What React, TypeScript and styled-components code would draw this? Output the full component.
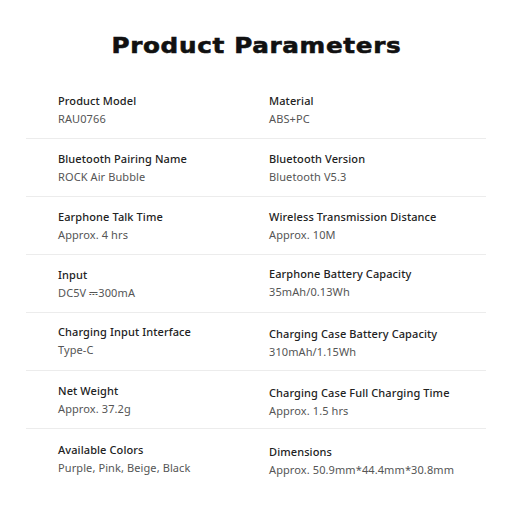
import React from "react";
import styled, { createGlobalStyle } from "styled-components";

const Global = createGlobalStyle`
  html, body { margin: 0; padding: 0; background: #fff; }
  body { font-family: "Noto Sans", "DejaVu Sans", sans-serif; }
`;

const Page = styled.div`
  width: 512px;
  height: 512px;
  display: flex;
  flex-direction: column;
  align-items: center;
  background: #fff;
`;

const Title = styled.h1`
  margin: 0;
  padding-top: 32px;
  height: 81px;
  box-sizing: border-box;
  font-family: "DejaVu Sans", sans-serif;
  font-weight: 700;
  font-size: 22px;
  line-height: 28px;
  letter-spacing: 0.6px;
  color: #111;
  -webkit-text-stroke: 0.6px #111;
  transform: scaleX(1.12);
`;

const Table = styled.div`
  width: 460px;
  display: flex;
  flex-direction: column;
`;

const Row = styled.div<{ $last?: boolean }>`
  display: grid;
  grid-template-columns: 211px 1fr;
  padding: 11px 0 10px 32px;
  border-bottom: ${(p) => (p.$last ? "none" : "1px solid #ececec")};
`;

const Cell = styled.div<{ $shift?: number }>`
  display: flex;
  flex-direction: column;
  transform: translateY(${(p) => p.$shift ?? 0}px);
`;

const Label = styled.div`
  font-size: 11px;
  line-height: 18px;
  font-weight: 500;
  color: #222;
  letter-spacing: 0.1px;
`;

const Value = styled.div`
  font-size: 11px;
  line-height: 18px;
  color: #555;
  letter-spacing: 0.1px;
`;

type Item = { label: string; value: React.ReactNode; shift?: number };

const rows: [Item, Item][] = [
  [
    { label: "Product Model", value: "RAU0766" },
    { label: "Material", value: "ABS+PC" },
  ],
  [
    { label: "Bluetooth Pairing Name", value: "ROCK Air Bubble" },
    { label: "Bluetooth Version", value: "Bluetooth V5.3" },
  ],
  [
    { label: "Earphone Talk Time", value: "Approx. 4 hrs" },
    { label: "Wireless Transmission Distance", value: "Approx. 10M" },
  ],
  [
    { label: "Input", value: "DC5V \u2393300mA" },
    { label: "Earphone Battery Capacity", value: "35mAh/0.13Wh", shift: -1 },
  ],
  [
    { label: "Charging Input Interface", value: "Type-C", shift: -1 },
    { label: "Charging Case Battery Capacity", value: "310mAh/1.15Wh", shift: 1 },
  ],
  [
    { label: "Net Weight", value: "Approx. 37.2g" },
    { label: "Charging Case Full Charging Time", value: "Approx. 1.5 hrs", shift: 2 },
  ],
  [
    { label: "Available Colors", value: "Purple, Pink, Beige, Black", shift: 1 },
    { label: "Dimensions", value: "Approx. 50.9mm*44.4mm*30.8mm", shift: 3 },
  ],
];

export default function App() {
  return (
    <Page>
      <Global />
      <Title>Product Parameters</Title>
      <Table>
        {rows.map((r, i) => (
          <Row key={i} $last={i === rows.length - 1}>
            {r.map((c, j) => (
              <Cell key={j} $shift={c.shift}>
                <Label>{c.label}</Label>
                <Value>{c.value}</Value>
              </Cell>
            ))}
          </Row>
        ))}
      </Table>
    </Page>
  );
}
